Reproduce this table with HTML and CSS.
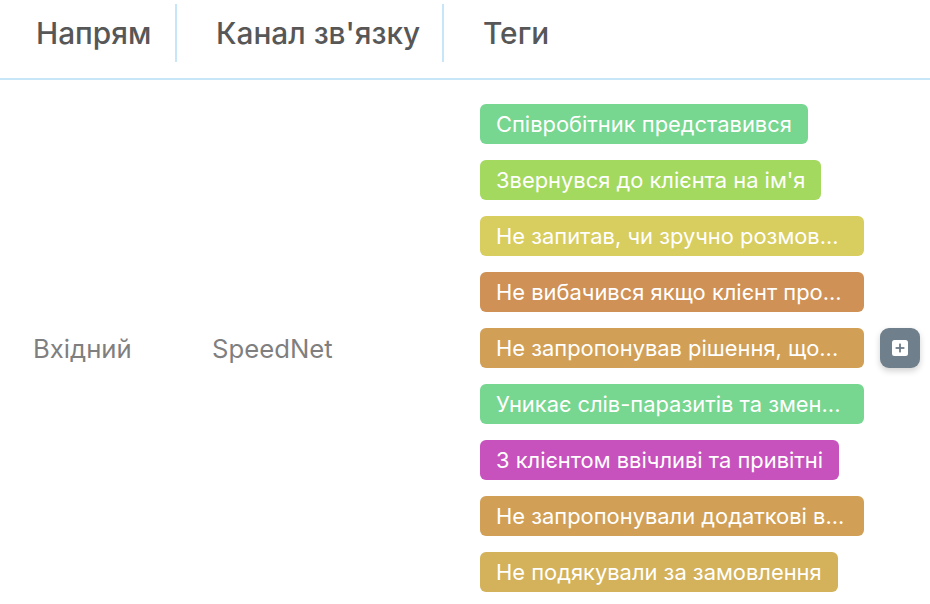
FILE: index.html
```html
<!DOCTYPE html>
<html lang="uk">
<head>
<meta charset="utf-8">
<title>Теги</title>
<link rel="stylesheet" href="styles.css">
</head>
<body>
<div class="table">
  <div class="head">
    <div class="hcell c1"><span>Напрям</span></div>
    <div class="hcell c2"><span>Канал зв'язку</span></div>
    <div class="hcell c3"><span>Теги</span></div>
  </div>
  <div class="row">
    <div class="cell c1">Вхідний</div>
    <div class="cell c2">SpeedNet</div>
    <div class="cell c3">
      <div class="tags">
        <span class="tag t-green">Співробітник представився</span>
        <span class="tag t-lime">Звернувся до клієнта на ім'я</span>
        <span class="tag cut t-yellow">Не запитав, чи зручно розмов...</span>
        <span class="tag cut t-orange">Не вибачився якщо клієнт про...</span>
        <span class="tag cut t-amber">Не запропонував рішення, що...</span>
        <span class="tag cut t-green">Уникає слів-паразитів та змен...</span>
        <span class="tag t-magenta">З клієнтом ввічливі та привітні</span>
        <span class="tag cut t-amber">Не запропонували додаткові в...</span>
        <span class="tag t-gold">Не подякували за замовлення</span>
      </div>
      <button class="add" type="button" aria-label="Додати тег">
        <svg width="16" height="16" viewBox="0 0 16 16" aria-hidden="true">
          <rect x="0" y="0" width="16" height="16" rx="2.5" fill="#ffffff"/>
          <rect x="7.1" y="3.6" width="1.8" height="8.8" fill="#6e7d89"/>
          <rect x="3.6" y="7.1" width="8.8" height="1.8" fill="#6e7d89"/>
        </svg>
      </button>
    </div>
  </div>
</div>
</body>
</html>
```
FILE: styles.css
```css
html, body {
  margin: 0;
  padding: 0;
  background: #ffffff;
}
body {
  font-family: Inter, "Noto Sans", sans-serif;
  overflow: hidden;
}
.table {
  width: 930px;
}
.head {
  display: grid;
  grid-template-columns: 175px 265px 1fr;
  column-gap: 2px;
  padding: 4px 0 16px;
  border-bottom: 2px solid #c7e6f8;
}
.hcell {
  height: 58px;
  display: flex;
  align-items: center;
  font-family: Inter, "Noto Sans", sans-serif;
  font-weight: 500;
  font-size: 29.8px;
  color: #575757;
}
.head .c1 { padding-left: 36px; box-shadow: 2px 0 0 #c7e6f8; }
.head .c2 { padding-left: 39px; box-shadow: 2px 0 0 #c7e6f8; }
.head .c3 { padding-left: 39px; }
.row {
  display: grid;
  grid-template-columns: 177px 267px 1fr;
  align-items: center;
  padding: 24px 0;
}
.cell {
  font-size: 25.7px;
  color: #7f7f7f;
}
.row .c1 { padding-left: 33px; }
.row .c2 { padding-left: 35px; }
.row .c3 {
  padding-left: 36px;
  display: flex;
  align-items: center;
  gap: 16px;
}
.tags {
  width: 384px;
  display: flex;
  flex-direction: column;
  align-items: flex-start;
  gap: 16px;
}
.tag {
  box-sizing: border-box;
  max-width: 384px;
  height: 40px;
  line-height: 40px;
  padding: 0 16px;
  border-radius: 6px;
  color: #ffffff;
  font-size: 21.9px;
  white-space: nowrap;
  overflow: hidden;
}
.tag.cut {
  width: 384px;
}
.t-green { background: #77d68f; }
.t-lime { background: #a3d95e; }
.t-yellow { background: #d8cd5f; }
.t-orange { background: #cf9155; }
.t-amber { background: #d1a056; }
.t-magenta { background: #c752bd; }
.t-gold { background: #d3b25b; }
.add {
  width: 40px;
  height: 40px;
  border: 0;
  padding: 0;
  border-radius: 9px;
  background: #6f7f8b;
  box-shadow: 0 3px 6px rgba(0, 0, 0, 0.18);
  display: flex;
  align-items: center;
  justify-content: center;
}
```
